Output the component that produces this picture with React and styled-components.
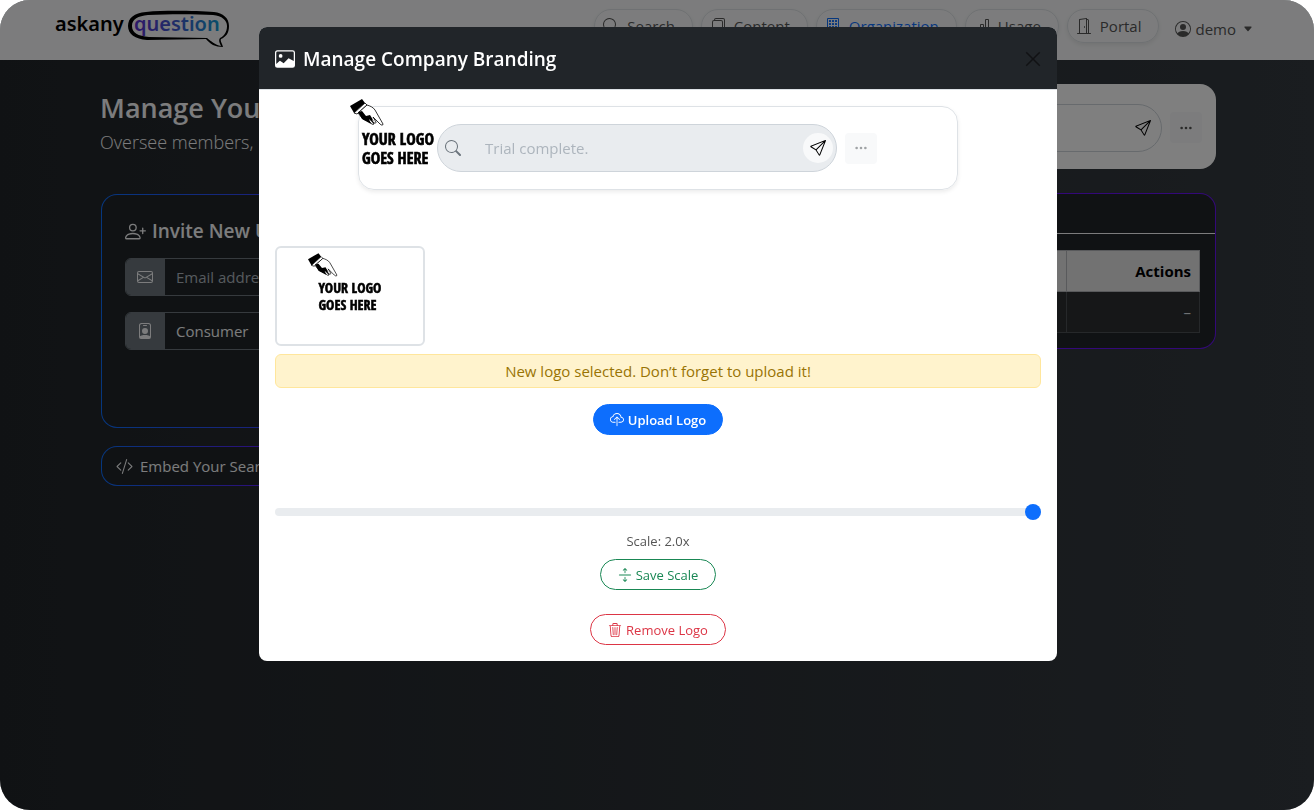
import { useState } from "react";
import styled, { createGlobalStyle } from "styled-components";
import {
    BsArrowsExpand,
    BsBarChart,
    BsBuilding,
    BsCaretDownFill,
    BsCloudUpload,
    BsCodeSlash,
    BsDoorOpen,
    BsEnvelope,
    BsFiles,
    BsImage,
    BsPersonBadge,
    BsPersonCircle,
    BsPersonPlus,
    BsSearch,
    BsSend,
    BsThreeDots,
    BsTrash3,
    BsXLg,
} from "react-icons/bs";

const GlobalStyle = createGlobalStyle`
    * {
        box-sizing: border-box;
    }

    body {
        margin: 0;
        background-color: #fff;
        color: #212529;
        font-family: "Open Sans", "Noto Sans", sans-serif;
        font-size: 15px;
        line-height: 24px;
    }

    button, input, select {
        font: inherit;
    }
`;

const Page = styled.div`
    min-height: 100vh;
    border-radius: 30px;
    overflow: hidden;
    background: linear-gradient(90deg, #212529, #343a40);
`;

const Header = styled.header`
    display: flex;
    align-items: center;
    justify-content: space-between;
    height: 60px;
    padding: 0 61px 0 55px;
    background-color: #f8f9fa;
`;

const Nav = styled.nav`
    display: flex;
    align-items: center;
    gap: 8px;
`;

const NavPill = styled.a`
    display: flex;
    align-items: center;
    gap: 8px;
    height: 34px;
    margin-bottom: 8px;
    padding: 0 17px 0 8px;
    border: 1px solid #dee2e6;
    border-radius: 17px;
    box-shadow: 0 2px 4px rgba(0, 0, 0, 0.08);
    color: ${({ $active }) => ($active ? "#0d6efd" : "#555")};
    text-decoration: none;
`;

const UserButton = styled.button`
    display: flex;
    align-items: center;
    gap: 4px;
    margin-bottom: 2px;
    padding: 0 0 0 8px;
    border: none;
    background-color: transparent;
    color: #555;
    cursor: pointer;
`;

const Caret = styled(BsCaretDownFill)`
    margin-left: 3px;
`;

const Container = styled.main`
    max-width: 1140px;
    margin: 0 auto;
    padding: 24px 11px 24px 13px;
`;

const TopRow = styled.div`
    display: flex;
    align-items: flex-start;
    justify-content: space-between;
    margin-bottom: 24px;
`;

const Title = styled.h1`
    margin: 8px 0 0;
    color: #f8f9fa;
    font-size: 27px;
    font-weight: 600;
    line-height: 32px;
`;

const Subtitle = styled.p`
    margin: 4px 0 0;
    color: #f8f9fa;
    font-size: 18px;
    font-weight: 300;
    line-height: 28px;
`;

const SearchCard = styled.div`
    display: flex;
    align-items: center;
    justify-content: flex-end;
    gap: 8px;
    width: 500px;
    height: 85px;
    padding: 2px 14px 0 17px;
    border-radius: 16px;
    background-color: #fff;
`;

const SearchBox = styled.div`
    display: flex;
    align-items: center;
    flex: ${({ $fixed }) => ($fixed ? "0 0 400px" : "1")};
    height: 48px;
    padding: 0 3px 0 7px;
    border: 1px solid #ced4da;
    border-radius: 24px;
    background-color: ${({ $disabled }) => ($disabled ? "#e9ecef" : "#fff")};
    color: #6c757d;
`;

const SearchInput = styled.input`
    flex: 1;
    min-width: 0;
    padding: 0 0 0 24px;
    border: none;
    outline: none;
    background-color: transparent;

    &::placeholder {
        color: #adb5bd;
    }
`;

const SendButton = styled.button`
    display: flex;
    align-items: center;
    justify-content: center;
    width: 30px;
    height: 30px;
    padding: 0;
    border: none;
    border-radius: 50%;
    background-color: ${({ $tinted }) => ($tinted ? "#f8f9fa" : "transparent")};
    color: #000;
`;

const MoreButton = styled.button`
    display: flex;
    align-items: center;
    justify-content: center;
    width: 32px;
    height: 31px;
    padding: 0;
    border: none;
    border-radius: 4px;
    background-color: #f8f9fa;
    color: ${({ $muted }) => ($muted ? "#a0a3a6" : "#555")};
`;

const Columns = styled.div`
    display: grid;
    grid-template-columns: 1fr 2fr;
    gap: 24px;
    align-items: start;
`;

const SideColumn = styled.div`
    display: flex;
    flex-direction: column;
    align-items: flex-start;
    gap: 18px;
    padding: 1px;
`;

const GradientPanel = styled.div`
    width: 100%;
    border: 1px solid transparent;
    border-radius: 16px;
    background: linear-gradient(#212529, #212529) padding-box,
        linear-gradient(90deg, #0d6efd, #6610f2) border-box;
`;

const InviteCard = styled(GradientPanel)`
    min-height: 234px;
    padding: 24px 23px 23px;
`;

const CardTitle = styled.h2`
    display: flex;
    align-items: center;
    gap: 6px;
    margin: 0 0 15px;
    color: #f8f9fa;
    font-size: 19px;
    font-weight: 600;
    line-height: 24px;
`;

const InputGroup = styled.label`
    display: flex;
    height: 38px;
    margin-bottom: 16px;
    border: 1px solid #6c757d;
    border-radius: 6px;
    overflow: hidden;
`;

const Addon = styled.span`
    display: flex;
    align-items: center;
    justify-content: center;
    flex: 0 0 39px;
    padding-right: 2px;
    background-color: #6c757d;
    color: #f8f9fa;
`;

const Field = styled.input`
    flex: 1;
    min-width: 0;
    padding: 0 11px;
    border: none;
    background-color: transparent;
    color: #f8f9fa;

    &::placeholder {
        color: #adb5bd;
    }
`;

// the browser indents select text by 4px on its own
const SelectField = styled(Field).attrs({ as: "select" })`
    padding: 0 7px;
`;

const EmbedButton = styled(GradientPanel).attrs({ as: "button" })`
    display: flex;
    align-items: center;
    gap: 7px;
    width: auto;
    height: 40px;
    padding: 0 16px 0 14px;
    color: #f8f9fa;
    cursor: pointer;
`;

const TableCard = styled(GradientPanel)`
    background: linear-gradient(#212529, #212529) padding-box,
        linear-gradient(90deg, #0d6efd, #6610f2 50%) border-box;
`;

const TableCardHeader = styled.div`
    height: 40px;
    border-bottom: 1px solid #f8f9fa;
`;

const TableWrap = styled.div`
    padding: 16px 15px 15px;
`;

const Table = styled.table`
    width: 100%;
    border-collapse: collapse;
    color: #dee2e6;

    th, td {
        height: 41px;
        padding: 8px;
        border: 1px solid #4d5154;
        text-align: right;
    }

    th {
        border-color: #b3b5b8;
        background-color: #e4e4e5;
        color: #000;
        font-weight: 700;
    }

    td {
        background-color: #2c2e31;
    }

    th:last-child {
        width: 133px;
    }
`;

const Overlay = styled.div`
    position: fixed;
    inset: 0;
    display: flex;
    align-items: flex-start;
    justify-content: center;
    padding: 27px 0 27px 2px;
    border-radius: 30px;
    background-color: rgba(0, 0, 0, 0.5);
    overflow: auto;
`;

const Modal = styled.section`
    width: 100%;
    max-width: 798px;
    border-radius: 8px;
    background-color: #fff;
    overflow: hidden;
`;

const ModalHeader = styled.div`
    display: flex;
    align-items: center;
    justify-content: space-between;
    height: 63px;
    padding: 2px 15px 0 16px;
    border-bottom: 1px solid #dee2e6;
    background-color: #212529;
    color: #fff;
`;

const ModalTitle = styled.h2`
    display: flex;
    align-items: center;
    gap: 8px;
    margin: 0;
    font-size: 19px;
    font-weight: 600;
    line-height: 30px;
`;

const CloseButton = styled.button`
    display: flex;
    padding: 0;
    border: none;
    background-color: transparent;
    color: #111315;
    cursor: pointer;

    svg {
        stroke: currentColor;
        stroke-width: 0.4;
    }
`;

const ModalBody = styled.div`
    display: flex;
    flex-direction: column;
    align-items: center;
    padding: 16px;
`;

const PreviewCard = styled.div`
    display: flex;
    align-items: center;
    gap: 8px;
    width: 100%;
    max-width: 600px;
    height: 84px;
    margin-bottom: 56px;
    border: 1px solid #dee2e6;
    border-radius: 16px;
    box-shadow: 0 2px 4px rgba(0, 0, 0, 0.08);
`;

const LogoSlot = styled.div`
    display: flex;
    justify-content: center;
    flex: 0 0 78px;
    min-width: 0;
    margin-right: -8px;

    svg {
        flex-shrink: 0;
    }
`;

const Thumbnail = styled.div`
    display: flex;
    align-items: center;
    justify-content: center;
    align-self: flex-start;
    width: 150px;
    height: 100px;
    margin-bottom: 8px;
    border: 2px solid #dee2e6;
    border-radius: 6px;
`;

const Alert = styled.div`
    width: 100%;
    margin-bottom: 16px;
    padding: 4px;
    border: 1px solid #ffe69c;
    border-radius: 6px;
    background-color: #fff3cd;
    color: #997404;
    text-align: center;
`;

const PillButton = styled.button`
    display: flex;
    align-items: center;
    gap: 4px;
    height: 31px;
    padding: 0 ${({ $solid }) => ($solid ? 16 : 17)}px;
    border: 1px solid ${({ $color }) => $color};
    border-radius: 16px;
    background-color: ${({ $solid, $color }) => ($solid ? $color : "transparent")};
    color: ${({ $solid, $color }) => ($solid ? "#fff" : $color)};
    font-size: 13px;
    font-weight: ${({ $solid }) => ($solid ? 600 : 400)};
    cursor: pointer;
`;

const ScaleGroup = styled.div`
    display: flex;
    flex-direction: column;
    align-items: center;
    width: 100%;
    margin: 65px 0 24px;
`;

const ScaleLabel = styled.label`
    margin: 7px 0;
    color: #555;
    font-size: 13px;
    line-height: 21px;
`;

const Slider = styled.input`
    appearance: none;
    width: 100%;
    height: 24px;
    margin: 0;
    background-color: transparent;

    &::-webkit-slider-runnable-track {
        height: 8px;
        border-radius: 8px;
        background-color: #e9ecef;
    }

    &::-webkit-slider-thumb {
        appearance: none;
        width: 16px;
        height: 16px;
        margin-top: -4px;
        border-radius: 50%;
        background-color: #0d6efd;
    }
`;

const BrandLogo = () => (
    <svg width="176" height="40" viewBox="0 0 176 40" role="img">
        <defs>
            <linearGradient id="brand" x1="78" x2="168" y1="0" y2="0" gradientUnits="userSpaceOnUse">
                <stop offset="0" stopColor="#5b2fd0" />
                <stop offset="0.5" stopColor="#3f5fd0" />
                <stop offset="1" stopColor="#0f9fd4" />
            </linearGradient>
        </defs>
        <path
            fill="#000"
            fillRule="evenodd"
            d="M91 2C112 0 142 1 159 2C168 3 174 8 174 16C174 23 171 27 166 29C165 31 167 33 168 37C160 37 155 34 151 29L92 30C80 29 73 24 73 16C73 8 79 3 91 2ZM93 5C83 6 77 9 77 16C77 23 83 26 94 27L152 28C156 31 160 35 166 36C165 33 163 31 165 28C169 26 172 22 172 16C172 10 167 6 158 5C141 4 113 4 93 5Z"
        />
        <text x="0" y="21" fontFamily="Noto Sans, Open Sans, sans-serif" fontSize="20" fontWeight="600" fill="#000">
            askany
        </text>
        <text x="79" y="21" fontFamily="Noto Sans, Open Sans, sans-serif" fontSize="20" fontWeight="600" fill="url(#brand)">
            question
        </text>
    </svg>
);

const CompanyLogo = ({ width, height }) => (
    <svg width={width} height={height} viewBox="0 0 96 100" role="img">
        <path fill="#000" d="M0 8L12 1L15 5L4 15Z" />
        <path fill="#fff" stroke="#000" strokeWidth="0.8" d="M4 15L15 5L17 7L7 16Z" />
        <path
            fill="#fff"
            stroke="#000"
            strokeWidth="0.8"
            strokeLinejoin="round"
            d="M8 15L17 7C20 8 23 9 25 12L33 26C33 28 31 27 30 26L23 19L26 24C26 26 24 25 23 24L24 26C23 27 21 26 20 24L13 21Z"
        />
        <path fill="#000" d="M8 14L12 13L16 18L20 17L25 25L22 21L24 26L19 21L21 26L12 21Z" />
        <text
            fontFamily="Open Sans Condensed, Roboto Condensed, Liberation Sans Narrow, DejaVu Sans Condensed, sans-serif"
            fontSize="16"
            fontWeight="700"
            fill="#000"
            stroke="#000"
            strokeWidth="0.6"
        >
            <tspan x="12" y="47">YOUR LOGO</tspan>
            <tspan x="12" y="66">GOES HERE</tspan>
        </text>
    </svg>
);

const navItems = [
    { label: "Search", Icon: BsSearch },
    { label: "Content", Icon: BsFiles },
    { label: "Organization", Icon: BsBuilding, active: true },
    { label: "Usage", Icon: BsBarChart },
    { label: "Portal", Icon: BsDoorOpen },
];

const Navbar = () => (
    <Header>
        <BrandLogo />
        <Nav>
            {navItems.map(({ label, Icon, active }) => (
                <NavPill key={label} href="#" $active={active}>
                    <Icon size={16} />
                    {label}
                </NavPill>
            ))}
            <UserButton>
                <BsPersonCircle size={16} />
                demo
                <Caret size={10} />
            </UserButton>
        </Nav>
    </Header>
);

const Organization = () => (
    <Container>
        <TopRow>
            <div>
                <Title>Manage Your Organization</Title>
                <Subtitle>Oversee members,</Subtitle>
            </div>
            <SearchCard>
                <SearchBox>
                    <SearchInput aria-label="Search" />
                    <SendButton aria-label="Send"><BsSend size={16} /></SendButton>
                </SearchBox>
                <MoreButton aria-label="More"><BsThreeDots size={14} /></MoreButton>
            </SearchCard>
        </TopRow>
        <Columns>
            <SideColumn>
                <InviteCard>
                    <CardTitle><BsPersonPlus size={21} /> Invite New Users</CardTitle>
                    <InputGroup>
                        <Addon><BsEnvelope size={16} /></Addon>
                        <Field type="email" placeholder="Email address" aria-label="Email address" />
                    </InputGroup>
                    <InputGroup>
                        <Addon><BsPersonBadge size={16} /></Addon>
                        <SelectField aria-label="Role">
                            <option>Consumer</option>
                        </SelectField>
                    </InputGroup>
                </InviteCard>
                <EmbedButton><BsCodeSlash size={17} /> Embed Your Search</EmbedButton>
            </SideColumn>
            <TableCard>
                <TableCardHeader />
                <TableWrap>
                    <Table>
                        <thead>
                            <tr>
                                <th />
                                <th>Actions</th>
                            </tr>
                        </thead>
                        <tbody>
                            <tr>
                                <td />
                                <td>–</td>
                            </tr>
                        </tbody>
                    </Table>
                </TableWrap>
            </TableCard>
        </Columns>
    </Container>
);

const BrandingModal = ({ onClose }) => {
    const [scale, setScale] = useState(2);

    return (
        <Overlay>
            <Modal role="dialog" aria-labelledby="branding-title">
                <ModalHeader>
                    <ModalTitle id="branding-title"><BsImage size={20} /> Manage Company Branding</ModalTitle>
                    <CloseButton aria-label="Close" onClick={onClose}><BsXLg size={18} /></CloseButton>
                </ModalHeader>
                <ModalBody>
                    <PreviewCard>
                        <LogoSlot><CompanyLogo width={96} height={100} /></LogoSlot>
                        <SearchBox $fixed $disabled>
                            <BsSearch size={16} />
                            <SearchInput placeholder="Trial complete." aria-label="Preview search" disabled />
                            <SendButton $tinted aria-label="Send"><BsSend size={16} /></SendButton>
                        </SearchBox>
                        <MoreButton $muted aria-label="More"><BsThreeDots size={14} /></MoreButton>
                    </PreviewCard>
                    <Thumbnail><CompanyLogo width={84} height={88} /></Thumbnail>
                    <Alert>New logo selected. Don’t forget to upload it!</Alert>
                    <PillButton $solid $color="#0d6efd"><BsCloudUpload size={14} /> Upload Logo</PillButton>
                    <ScaleGroup>
                        <Slider
                            id="scale"
                            type="range"
                            min="0.5"
                            max="2"
                            step="0.1"
                            value={scale}
                            onChange={(e) => setScale(Number(e.target.value))}
                        />
                        <ScaleLabel htmlFor="scale">Scale: {scale.toFixed(1)}x</ScaleLabel>
                        <PillButton $color="#198754"><BsArrowsExpand size={14} /> Save Scale</PillButton>
                    </ScaleGroup>
                    <PillButton $color="#dc3545"><BsTrash3 size={14} /> Remove Logo</PillButton>
                </ModalBody>
            </Modal>
        </Overlay>
    );
};

const App = () => {
    const [open, setOpen] = useState(true);

    return (
        <>
            <GlobalStyle />
            <Page>
                <Navbar />
                <Organization />
            </Page>
            {open && <BrandingModal onClose={() => setOpen(false)} />}
        </>
    );
};

export default App;
